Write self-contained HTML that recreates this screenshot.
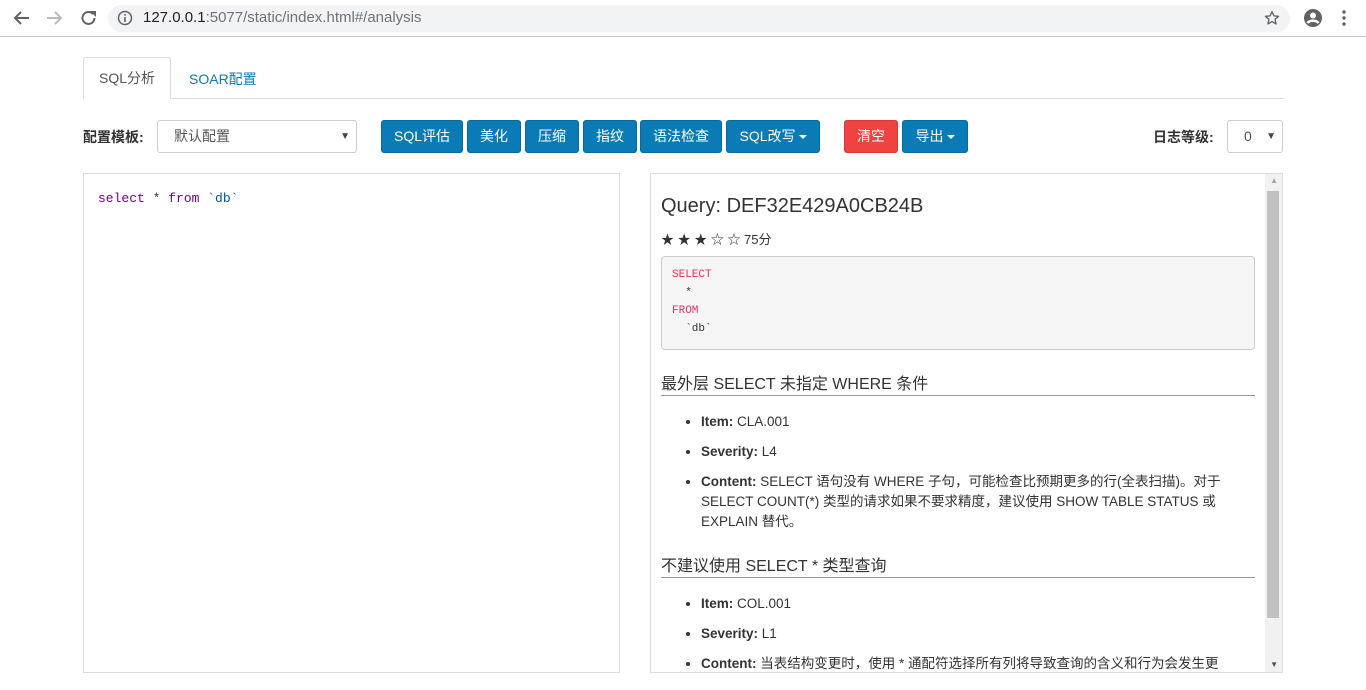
<!DOCTYPE html>
<html><head><meta charset="utf-8"><style>
*{box-sizing:border-box}
body{margin:0;width:1366px;height:690px;overflow:hidden;background:#fff;font-family:"Liberation Sans","Noto Sans CJK SC",sans-serif;color:#333;font-size:14px;position:relative}
.abs{position:absolute}
.bar{left:0;top:0;width:1366px;height:37px;border-bottom:1px solid #c8c8c8;background:#fff}
.url{left:108px;top:5px;width:1182px;height:27px;background:#f1f3f4;border-radius:14px}
.btn{position:absolute;top:120px;height:33px;background:#0a7bb5;color:#fff;border-radius:3px;border:1px solid #086a9c;font-size:14px;text-align:center;line-height:31px}
.car{display:inline-block;border-top:4px solid #fff;border-left:4px solid transparent;border-right:4px solid transparent;vertical-align:middle;margin-left:3px}
.panel{border:1px solid #ddd;top:173px;height:500px}
li{margin:0 0 10px;line-height:20px}
h3{font-weight:normal;font-size:16px;margin:0;border-bottom:1px solid #999;padding-bottom:1px;color:#333}
</style></head><body>
<div class="abs bar"></div>
<div class="abs url"></div>
<svg class="abs" style="left:12px;top:9px" width="90" height="18" viewBox="0 0 90 18"><path d="M17 9H4M9 3L3 9l6 6" stroke="#5f6368" stroke-width="2" fill="none"/><path d="M35 9h13M43 3l6 6-6 6" stroke="#bbb" stroke-width="2" fill="none"/><path d="M81 5a6 6 0 1 0 1.5 4" stroke="#5f6368" stroke-width="2" fill="none"/><path d="M78 2h6v6z" fill="#5f6368"/></svg>
<svg class="abs" style="left:117px;top:10px" width="16" height="16"><circle cx="8" cy="8" r="6.5" stroke="#5f6368" stroke-width="1.5" fill="none"/><rect x="7.2" y="7" width="1.6" height="5" fill="#5f6368"/><rect x="7.2" y="4" width="1.6" height="1.6" fill="#5f6368"/></svg>
<div class="abs" style="left:143px;top:9px;font-size:15px;color:#202124">127.0.0.1<span style="color:#6f7378">:5077/static/index.html#/analysis</span></div>
<svg class="abs" style="left:1264px;top:10px" width="16" height="16" viewBox="0 0 24 24"><path d="M12 2.5l2.9 6.3 6.9.7-5.2 4.6 1.5 6.8L12 17.4l-6.1 3.5 1.5-6.8L2.2 9.5l6.9-.7z" stroke="#5f6368" stroke-width="2" fill="none" stroke-linejoin="round"/></svg>
<svg class="abs" style="left:1303px;top:8px" width="20" height="20"><circle cx="10" cy="10" r="9" fill="#5f6368"/><circle cx="10" cy="7.5" r="3" fill="#fff"/><path d="M4.5 15c2-3 9-3 11 0" stroke="#fff" stroke-width="2.5" fill="none"/></svg>
<svg class="abs" style="left:1341px;top:10px" width="6" height="16"><circle cx="3" cy="2" r="1.7" fill="#5f6368"/><circle cx="3" cy="8" r="1.7" fill="#5f6368"/><circle cx="3" cy="14" r="1.7" fill="#5f6368"/></svg>

<div class="abs" style="left:83px;top:98px;width:1200px;height:1px;background:#ddd"></div>
<div class="abs" style="left:83px;top:57px;width:88px;height:42px;border:1px solid #ddd;border-bottom:none;background:#fff;border-radius:3px 3px 0 0;text-align:center;line-height:40px;color:#555">SQL分析</div>
<div class="abs" style="left:189px;top:69px;color:#0a7bb5">SOAR配置</div>

<div class="abs" style="left:83px;top:127px;font-weight:bold;color:#333">配置模板:</div>
<div class="abs" style="left:157px;top:120px;width:200px;height:33px;border:1px solid #ccc;border-radius:3px;padding-left:16px;line-height:31px;color:#555">默认配置<span style="position:absolute;right:6px;font-size:10px;color:#444">▼</span></div>
<div class="btn" style="left:381px;width:82px">SQL评估</div>
<div class="btn" style="left:467px;width:54px">美化</div>
<div class="btn" style="left:525px;width:54px">压缩</div>
<div class="btn" style="left:583px;width:54px">指纹</div>
<div class="btn" style="left:640px;width:82px">语法检查</div>
<div class="btn" style="left:726px;width:94px">SQL改写<span class="car"></span></div>
<div class="btn" style="left:844px;width:54px;background:#ee4340;border-color:#d63a37">清空</div>
<div class="btn" style="left:902px;width:66px">导出<span class="car"></span></div>
<div class="abs" style="left:1153px;top:127px;font-weight:bold">日志等级:</div>
<div class="abs" style="left:1227px;top:120px;width:56px;height:33px;border:1px solid #ccc;border-radius:3px;line-height:31px;padding-left:16px;color:#555">0<span style="position:absolute;right:6px;font-size:10px;color:#444">▼</span></div>

<div class="abs panel" style="left:83px;width:537px"></div>
<div class="abs" style="left:98px;top:191px;font-family:'Liberation Mono',monospace;font-size:13px"><span style="color:#708">select</span> * <span style="color:#708">from</span> <span style="color:#05a">`db`</span></div>

<div class="abs panel" style="left:650px;width:633px;overflow:hidden">
<div class="abs" style="right:0;top:0;width:17px;height:498px;background:#f1f1f1"></div>
<div class="abs" style="right:3px;top:17px;width:12px;height:427px;background:#c1c1c1"></div>
<div class="abs" style="right:4px;top:2px;font-size:8px;color:#a3a3a3">▲</div>
<div class="abs" style="right:4px;bottom:3px;font-size:8px;color:#505050">▼</div>
<div class="abs" style="left:10px;top:21px;font-size:20px;color:#333">Query: DEF32E429A0CB24B</div>
<div class="abs" style="left:10px;top:55px;font-size:13px">★ ★ ★ ☆ ☆ 75分</div>
<div class="abs" style="left:10px;top:82px;width:594px;height:94px;background:#f5f5f5;border:1px solid #ccc;border-radius:4px;font-family:'Liberation Mono',monospace;font-size:11px;line-height:18px;padding:9px 10px;white-space:pre;color:#333"><span style="color:#e8305a">SELECT</span>
  *
<span style="color:#e8305a">FROM</span>
  `db`</div>
<div class="abs" style="left:10px;top:196px;width:594px"><h3>最外层 SELECT 未指定 WHERE 条件</h3>
<ul style="margin:16px 0 0;padding-left:40px;font-size:13.5px;padding-right:10px">
<li><b>Item:</b> CLA.001</li><li><b>Severity:</b> L4</li><li><b>Content:</b> SELECT 语句没有 WHERE 子句，可能检查比预期更多的行(全表扫描)。对于 SELECT COUNT(*) 类型的请求如果不要求精度，建议使用 SHOW TABLE STATUS 或 EXPLAIN 替代。</li></ul>
<h3 style="margin-top:20px">不建议使用 SELECT * 类型查询</h3>
<ul style="margin:16px 0 0;padding-left:40px;font-size:13.5px;white-space:nowrap">
<li><b>Item:</b> COL.001</li><li><b>Severity:</b> L1</li><li><b>Content:</b> 当表结构变更时，使用 * 通配符选择所有列将导致查询的含义和行为会发生更</li></ul>
</div>
</div>
</body></html>
